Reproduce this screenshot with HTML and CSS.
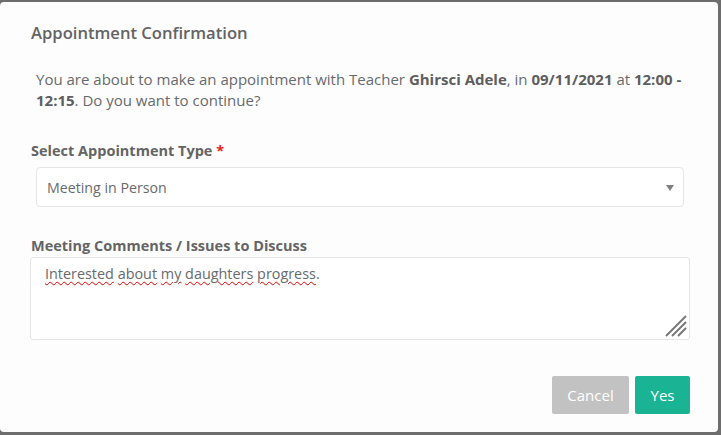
FILE: index.html
```html
<!DOCTYPE html>
<html>
<head>
<meta charset="utf-8">
<link rel="stylesheet" href="styles.css">
</head>
<body>
<div class="modal">
  <div class="modal-header">
    <h4 class="modal-title">Appointment Confirmation</h4>
  </div>
  <div class="modal-body">
    <p class="intro">You are about to make an appointment with Teacher <b>Ghirsci Adele</b>, in <b>09/11/2021</b> at <b>12:00 - 12:15</b>. Do you want to continue?</p>
    <label class="label first">Select Appointment Type <span class="req">*</span></label>
    <div class="select">
      <span>Meeting in Person</span>
      <span class="caret"></span>
    </div>
    <label class="label second">Meeting Comments / Issues to Discuss</label>
    <div class="textarea">
      <span class="sp">Interested</span> <span class="sp">about</span> <span class="sp">my</span> <span class="sp">daughters</span> <span class="sp">progress</span>.
      <svg class="grip" width="22" height="22" viewBox="0 0 22 22">
        <g stroke="#777" stroke-width="2" stroke-linecap="butt">
          <line x1="21" y1="1" x2="1" y2="21"/>
          <line x1="21" y1="7" x2="7" y2="21"/>
          <line x1="21" y1="13" x2="13" y2="21"/>
        </g>
      </svg>
    </div>
  </div>
  <div class="modal-footer">
    <button class="btn btn-cancel">Cancel</button>
    <button class="btn btn-yes">Yes</button>
  </div>
</div>
</body>
</html>
```
FILE: styles.css
```css
html, body {
  margin: 0;
  padding: 0;
}
body {
  background: #6d6d6d;
  font-family: "Open Sans", "Liberation Sans", sans-serif;
  color: #676a6c;
  width: 721px;
  height: 435px;
  overflow: hidden;
}
.modal {
  box-sizing: border-box;
  width: 718px;
  height: 430px;
  margin-top: 2px;
  background: #fdfdfd;
  border-radius: 4px;
  display: flex;
  flex-direction: column;
}
.modal-header {
  padding: 19px 0 0 31px;
}
.modal-title {
  margin: 0;
  font-size: 16.6px;
  font-weight: 600;
  line-height: 24px;
  color: #636363;
}
.modal-body {
  padding: 0 28px 0 30px;
  display: flex;
  flex-direction: column;
}
.intro {
  margin: 24px 0 0 6px;
  font-size: 15px;
  line-height: 21px;
  width: 652px;
  color: #676a6c;
}
.intro b {
  font-weight: 700;
  color: #5e5e5e;
}
.label {
  display: block;
  font-size: 14.5px;
  font-weight: 700;
  line-height: 20px;
  color: #646464;
  margin-left: 1px;
}
.label.first {
  margin-top: 30px;
}
.label.second {
  margin-top: 29px;
}
.req {
  color: #ed1c24;
}
.select {
  box-sizing: border-box;
  margin: 6px 6px 0 6px;
  height: 40px;
  border: 1px solid #e6e6e6;
  border-radius: 4px;
  background: #fff;
  display: flex;
  align-items: center;
  justify-content: space-between;
  padding: 0 9px 0 10px;
  font-size: 14.2px;
  color: #676a6c;
}
.caret {
  width: 0;
  height: 0;
  border-left: 4px solid transparent;
  border-right: 4px solid transparent;
  border-top: 6px solid #808080;
  margin-top: 1px;
}
.textarea {
  position: relative;
  box-sizing: border-box;
  margin-top: 1px;
  height: 83px;
  border: 1px solid #e5e6e7;
  border-radius: 3px;
  background: #fff;
  padding: 5px 14px;
  font-size: 14.4px;
  line-height: 22px;
  color: #676a6c;
}
.sp {
  text-decoration: underline wavy #e00000;
  text-decoration-thickness: 1px;
  text-underline-offset: 2px;
}
.grip {
  position: absolute;
  right: 2px;
  bottom: 2px;
}
.modal-footer {
  margin-top: 36px;
  display: flex;
  justify-content: flex-end;
  gap: 6px;
  padding-right: 28px;
}
.btn {
  border: none;
  border-radius: 2px;
  height: 38px;
  font-family: "Open Sans", "Liberation Sans", sans-serif;
  font-size: 15px;
  color: #fff;
  padding: 0;
}
.btn-cancel {
  width: 77px;
  background: #c2c2c2;
}
.btn-yes {
  width: 55px;
  background: #1ab394;
}
```
